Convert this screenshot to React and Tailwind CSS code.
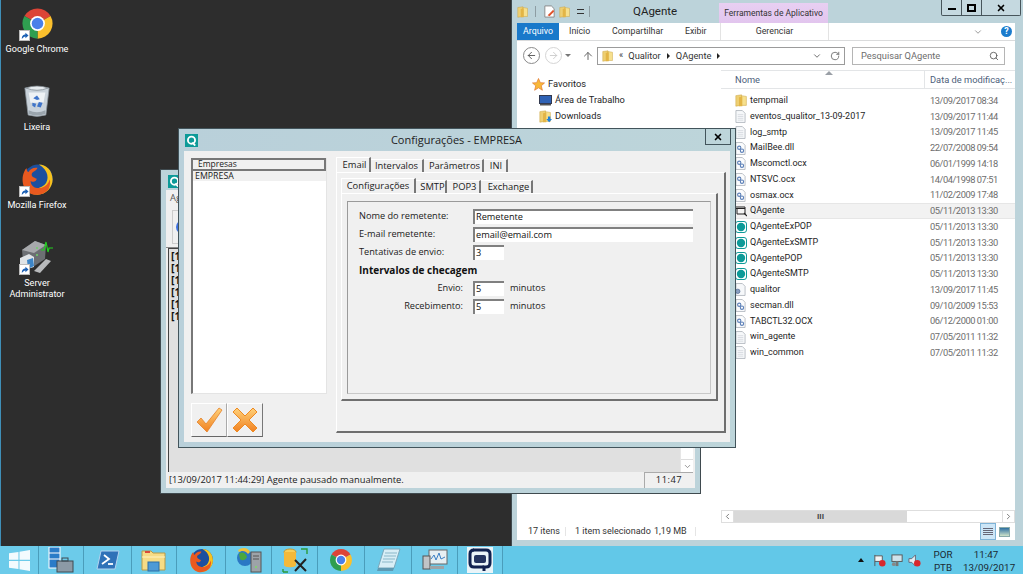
import React from "react";
import { Search, RotateCw, ChevronDown, ArrowUp, ArrowLeft, ArrowRight, X, ChevronLeft, ChevronRight } from "lucide-react";

const Shortcut = () => (
  <span className="absolute left-0 bottom-0 w-[11px] h-[11px] bg-white border border-[#bbb] flex items-center justify-center">
    <svg viewBox="0 0 10 10" className="w-[9px] h-[9px]"><path d="M2 9 C2 5 4 4 6 4 L6 2 L9.5 5 L6 8 L6 6 C4.5 6 3.5 7 2 9Z" fill="#1a5fb4" /></svg>
  </span>
);
const Chrome = ({ s = 33 }) => (
  <svg viewBox="0 0 24 24" width={s} height={s}>
    <path d="M12 12 L2.5 6.5 A11 11 0 0 1 21.5 6.5Z" fill="#dc4437" />
    <path d="M12 12 L21.5 6.5 A11 11 0 0 1 12 23Z" fill="#fbc02d" />
    <path d="M12 12 L12 23 A11 11 0 0 1 2.5 6.5Z" fill="#2f9e50" />
    <circle cx="12" cy="12" r="5.4" fill="#fff" />
    <circle cx="12" cy="12" r="4.2" fill="#4a80ea" />
  </svg>
);
const Firefox = ({ s = 33 }) => (
  <svg viewBox="0 0 24 24" width={s} height={s}>
    <circle cx="12.5" cy="11.5" r="10.5" fill="#1c4f9f" />
    <path d="M13 1 C18 1 23 5 23 12 C23 18 18 23 12 23 C8 23 4 21 2 17 C5 19 12 20 17 16 C21 12 20 5 13 1Z" fill="#f7c21d" />
    <path d="M2.5 6 C0 11 1 18 5 21 C10 25 17 23 20 19 C21 17 21.5 14 21 12 C20 15 18 17 15 18 C11 19 7 17 7 13 C9 14.5 11 13.5 11.5 11.5 C9.5 10.5 7 10 8 7.5 C9 6 11 6 12 3.5 C9 3 6.5 4.5 5.5 6.5 C4.5 6.5 4 5 4.2 3.8 C3.4 4.3 2.8 5.2 2.5 6Z" fill="#e9591f" />
  </svg>
);
const Bin = () => (
  <svg viewBox="0 0 30 36" width="28" height="34">
    <path d="M2 4 L28 4 L24.5 33 Q15 36 5.5 33Z" fill="#c9d2da" stroke="#8a949c" strokeWidth="0.8" />
    <path d="M3 4 Q15 0 27 4 Q15 9 3 4Z" fill="#e6ebef" stroke="#7e878e" strokeWidth="0.8" />
    <path d="M6 9 L24 9 L22 20 L8 20Z" fill="#eef2f5" />
    <path d="M11 15 l4 -3 l3 4 l-3 1z M10 20 l4 1 l-1 4 l-3 -2z M17 19 l4 1 l-2 5 l-4 -1z" fill="#3f74c9" />
    <path d="M6 28 Q15 32 24 28 L24 32 Q15 35 6 32Z" fill="#9ba5ad" />
  </svg>
);
const ServerAdmin = () => (
  <svg viewBox="0 0 36 34" width="36" height="34">
    <path d="M3 10 L16 1 L27 5 L26 19 L14 27 L4 21Z" fill="#6c6f73" />
    <path d="M3 10 L16 1 L27 5 L15 13Z" fill="#a7a9ac" />
    <path d="M1 18 L10 14 L15 17 L15 27 L5 30 L1 26Z" fill="#dfe3e6" />
    <path d="M8 20 L14 18 L15 26 L9 29Z" fill="#3d85c6" />
    <path d="M15 31 L27 19 L32 21 L21 33Z" fill="#b8babc" />
    <path d="M22 10 L25 10 L27 2 L29 12 L30 8 L34 8" fill="none" stroke="#22d01f" strokeWidth="1.2" />
    <circle cx="18" cy="8" r="1" fill="#71d26b" /><circle cx="18" cy="15" r="1" fill="#71d26b" />
  </svg>
);
const Folder = ({ s = 13, arrow }) => (
  <svg viewBox="0 0 16 16" width={s} height={s}>
    <path d="M1 2 L8 1 L8 14 L1 15Z" fill="#eecf72" stroke="#c9a23e" strokeWidth="0.6" />
    <path d="M8 2 L14 3 L14 14 L8 14Z" fill="#f6e08e" stroke="#c9a23e" strokeWidth="0.6" />
    <path d="M5 4 L9 3 L9 15 L5 15Z" fill="#e3b546" />
    {arrow && <path d="M11 8 L14 8 L14 11 L16 11 L12.5 15 L9 11 L11 11Z" fill="#1e80d8" />}
  </svg>
);
const Doc = () => (
  <svg viewBox="0 0 12 14" width="11" height="13">
    <path d="M1 .5 H8 L11 3.5 V13.5 H1Z" fill="#f6f8fa" stroke="#a4acb4" strokeWidth="0.8" />
    <path d="M3 5H9 M3 7H9 M3 9H9 M3 11H9" stroke="#cfd5da" strokeWidth="0.8" />
  </svg>
);
const Dll = () => (
  <svg viewBox="0 0 12 14" width="11" height="13">
    <path d="M1 .5 H8 L11 3.5 V13.5 H1Z" fill="#fbfcfd" stroke="#a4acb4" strokeWidth="0.8" />
    <circle cx="4.6" cy="6.2" r="1.8" fill="none" stroke="#5c80b8" strokeWidth="1.2" />
    <circle cx="7.6" cy="9.4" r="1.8" fill="none" stroke="#5c80b8" strokeWidth="1.2" />
  </svg>
);
const QApp = () => (
  <svg viewBox="0 0 12 12" width="12" height="12">
    <rect x=".5" y=".5" width="11" height="11" rx="2.5" fill="#fff" stroke="#0d9a98" strokeWidth="1" />
    <circle cx="6" cy="6" r="4.2" fill="#0d9a98" />
  </svg>
);
const QWin = () => (
  <svg viewBox="0 0 12 12" width="12" height="12">
    <path d="M1 2 H10 V9 H2 V3" fill="#f5f5f5" stroke="#222" strokeWidth="1" />
    <path d="M9 8 L12 11" stroke="#222" strokeWidth="1.2" />
    <path d="M1 3.5H10" stroke="#222" strokeWidth="1" />
  </svg>
);
const Cog = () => (
  <svg viewBox="0 0 12 14" width="11" height="13">
    <path d="M1 .5 H8 L11 3.5 V13.5 H1Z" fill="#f6f8fa" stroke="#a4acb4" strokeWidth="0.8" />
    <circle cx="3" cy="9" r="2.4" fill="#8aa0c0" stroke="#4e6a94" strokeWidth="0.8" />
  </svg>
);
const QLogo = () => (
  <span className="bg-[#0d9a98] flex items-center justify-center shrink-0 w-[13px] h-[13px]">
    <svg viewBox="0 0 12 12" width="11" height="11">
      <circle cx="6" cy="5.6" r="3.9" fill="none" stroke="#fff" strokeWidth="2" />
      <path d="M7 8 L10 11.5" stroke="#fff" strokeWidth="2" />
    </svg>
  </span>
);

const files = [
  ["tempmail", "13/09/2017 08:34", "folder"],
  ["eventos_qualitor_13-09-2017", "13/09/2017 11:44", "doc"],
  ["log_smtp", "13/09/2017 11:45", "doc"],
  ["MailBee.dll", "22/07/2008 09:54", "dll"],
  ["Mscomctl.ocx", "06/01/1999 14:18", "dll"],
  ["NTSVC.ocx", "14/04/1998 07:51", "dll"],
  ["osmax.ocx", "11/02/2009 17:48", "dll"],
  ["QAgente", "05/11/2013 13:30", "win"],
  ["QAgenteExPOP", "05/11/2013 13:30", "q"],
  ["QAgenteExSMTP", "05/11/2013 13:30", "q"],
  ["QAgentePOP", "05/11/2013 13:30", "q"],
  ["QAgenteSMTP", "05/11/2013 13:30", "q"],
  ["qualitor", "13/09/2017 11:45", "cog"],
  ["secman.dll", "09/10/2009 15:53", "dll"],
  ["TABCTL32.OCX", "06/12/2000 01:00", "dll"],
  ["win_agente", "07/05/2011 11:32", "doc"],
  ["win_common", "07/05/2011 11:32", "doc"],
];
const FileIcon = ({ t }) =>
  t === "folder" ? <Folder s={13} /> : t === "doc" ? <Doc /> : t === "dll" ? <Dll /> : t === "win" ? <QWin /> : t === "q" ? <QApp /> : <Cog />;

const DesktopIcon = ({ label, children }) => (
  <div className="h-[78px] w-[74px] flex flex-col items-center">
    <div className="relative h-[36px] w-[36px] flex items-center justify-center">{children}</div>
    <div className="mt-[3px] text-white text-[9.1px] leading-[11px] text-center whitespace-nowrap">{label}</div>
  </div>
);

const Explorer = () => (
  <div className="absolute left-[511px] top-0 w-[512px] h-[546px] bg-[#bcd3da] border-l border-[#3f4a4f] flex flex-col font-['Roboto',sans-serif]">
    <div className="h-[23px] flex items-center pl-[5px] shrink-0">
      <Folder s={12} />
      <span className="ml-[6px] w-px h-[11px] bg-[#8d9da3]" />
      <svg viewBox="0 0 14 14" width="13" height="13" className="ml-[7px]"><path d="M2 1H9L12 4V13H2Z" fill="#fff" stroke="#888" /><path d="M5 11 L11 5 L12 7 L7 12Z" fill="#e0522c" /></svg>
      <span className="ml-[3px]"><Folder s={12} /></span>
      <span className="ml-[6px] w-[7px] h-[5px] border-t border-b border-[#333]" />
      <span className="ml-[5px] w-px h-[11px] bg-[#8d9da3]" />
      <span className="ml-[43px] w-[86px] text-[11.5px] text-[#222] pt-[1px]">QAgente</span>
      <div className="w-[109px] h-[20px] mt-[3px] self-start bg-gradient-to-b from-[#e8cff2] to-[#e2c5ee] flex items-center justify-center text-[8.5px] text-[#333] whitespace-nowrap">Ferramentas de Aplicativo</div>
      <div className="ml-auto mr-[2px] self-start flex h-[16px] border border-t-0 border-[#47555b] rounded-b-[2px] bg-[#c5d9e0]">
        <span className="w-[20px] flex items-center justify-center border-r border-[#47555b]"><span className="w-[8px] h-[2px] mt-[3px] bg-black" /></span>
        <span className="w-[20px] flex items-center justify-center border-r border-[#47555b]"><span className="w-[9px] h-[8px] border-2 border-black" /></span>
        <span className="w-[38px] flex items-center justify-center"><X size={10} strokeWidth={4} color="#000" /></span>
      </div>
    </div>
    <div className="ml-[5px] mr-[8px] flex-1 bg-white flex flex-col min-h-0">
      <div className="h-[18px] flex items-center border-b border-[#dadbdc] text-[8.8px] text-[#333] shrink-0">
        <span className="w-[42px] h-[17px] bg-[#1979ca] text-white flex items-center justify-center">Arquivo</span>
        <span className="ml-[10px] w-[22px]">Início</span>
        <span className="ml-[21px] w-[52px]">Compartilhar</span>
        <span className="ml-[21px] w-[22px]">Exibir</span>
        <span className="ml-[13px] w-[109px] h-[17px] flex items-center justify-center border-x border-[#e3e3e3]">Gerenciar</span>
        <span className="ml-auto mr-[18px] flex"><ChevronDown size={10} color="#888" /></span>
        <span className="mr-[3px] w-[11px] h-[11px] rounded-full bg-[#1b7ccd] text-white text-[9px] font-bold flex items-center justify-center">?</span>
      </div>
      <div className="h-[29px] flex items-center shrink-0 pl-[6px]">
        <span className="w-[17px] h-[17px] rounded-full border border-[#8b8b8b] flex items-center justify-center"><ArrowLeft size={11} color="#555" /></span>
        <span className="ml-[5px] w-[17px] h-[17px] rounded-full border border-[#d5d5d5] flex items-center justify-center"><ArrowRight size={11} color="#ccc" /></span>
        <span className="ml-[3px] w-0 h-0 border-x-[3px] border-x-transparent border-t-[3px] border-t-[#777]" />
        <span className="ml-[11px] flex"><ArrowUp size={12} color="#666" /></span>
        <div className="ml-[3px] w-[248px] h-[18px] border border-[#9b9b9b] flex items-center pl-[4px] text-[9.3px] text-[#333]">
          <Folder s={12} />
          <span className="ml-[5px] text-[9px]">«</span>
          <span className="ml-[5px]">Qualitor</span>
          <span className="ml-[6px] w-0 h-0 border-y-[3px] border-y-transparent border-l-[3px] border-l-[#222]" />
          <span className="ml-[6px]">QAgente</span>
          <span className="ml-[6px] w-0 h-0 border-y-[3px] border-y-transparent border-l-[3px] border-l-[#222]" />
          <span className="ml-auto flex"><ChevronDown size={10} color="#555" /></span>
          <span className="ml-[8px] mr-[4px] flex"><RotateCw size={10} color="#666" /></span>
        </div>
        <div className="ml-[7px] w-[153px] h-[18px] border border-[#b5b5b5] flex items-center pl-[8px] text-[9.3px] text-[#6d6d6d]">
          Pesquisar QAgente
          <span className="ml-auto mr-[5px] flex"><Search size={10} color="#555" /></span>
        </div>
      </div>
      <div className="flex-1 flex min-h-0">
        <div className="w-[204px] shrink-0 text-[9.3px] text-[#1e1e1e] pl-[15px] pt-[6px]">
          <div className="h-[16px] flex items-center">
            <svg viewBox="0 0 14 14" width="13" height="13"><path d="M7 .5 L9 5 L13.5 5.3 L10 8.4 L11.2 13.2 L7 10.6 L2.8 13.2 L4 8.4 L.5 5.3 L5 5Z" fill="#f8b83a" stroke="#e0722a" strokeWidth="0.7" /></svg>
            <span className="ml-[3px]">Favoritos</span>
          </div>
          <div className="h-[16px] flex items-center pl-[7px]">
            <svg viewBox="0 0 13 11" width="13" height="11"><rect x=".5" y=".5" width="12" height="8" fill="#2f62b5" stroke="#333a4f" /><rect x="1" y="9" width="11" height="1.5" fill="#555" /></svg>
            <span className="ml-[3px]">Área de Trabalho</span>
          </div>
          <div className="h-[16px] flex items-center pl-[7px]">
            <Folder s={13} arrow />
            <span className="ml-[3px]">Downloads</span>
          </div>
        </div>
        <div className="flex-1 flex flex-col min-w-0">
          <div className="h-[19px] border-t border-b border-[#e3e5e7] flex items-center text-[9.3px] text-[#4c607a] shrink-0 relative">
            <span className="absolute left-[104px] top-0 w-0 h-0 border-x-[4px] border-x-transparent border-b-[4px] border-b-[#9a9fa6]" />
            <span className="pl-[14px] w-[204px] shrink-0 border-r border-[#e3e5e7] h-full flex items-center">Nome</span>
            <span className="pl-[5px] whitespace-nowrap">Data de modificaç...</span>
          </div>
          <div className="flex-1 pt-[4px] min-h-0 overflow-hidden">
            {files.map(([n, d, t]) => (
              <div key={n} className={`h-[15.75px] flex items-center ${n === "QAgente" ? "bg-[#f2f2f2] border-y border-[#e6e6e6]" : ""}`}>
                <span className="w-[29px] pl-[14px] flex shrink-0"><FileIcon t={t} /></span>
                <span className="w-[180px] text-[9px] text-[#1e1e1e] whitespace-nowrap">{n}</span>
                <span className="text-[9.3px] text-[#6d6d6d] whitespace-nowrap tracking-[-0.45px]">{d}</span>
              </div>
            ))}
          </div>
          <div className="h-[13px] flex border-y border-[#dedede] shrink-0">
            <span className="w-[13px] flex items-center justify-center border-x border-[#dedede]"><ChevronLeft size={9} color="#555" /></span>
            <span className="w-[173px] bg-[#d9d9d9] flex items-center justify-center text-[8px] text-[#444] font-bold leading-none">III</span>
            <span className="flex-1" />
            <span className="w-[13px] flex items-center justify-center border-x border-[#dedede]"><ChevronRight size={9} color="#555" /></span>
          </div>
        </div>
      </div>
      <div className="h-[17px] flex items-center shrink-0 text-[9px] text-[#333] pl-[11px] whitespace-nowrap">
        <span className="w-[37px]">17 itens</span>
        <span className="w-px h-[9px] bg-[#e5e5e5]" />
        <span className="ml-[9px] w-[79px]">1 item selecionado</span>
        <span>1,19 MB</span>
        <span className="ml-[8px] w-px h-[9px] bg-[#e5e5e5]" />
        <span className="ml-auto w-[16px] h-[17px] bg-[#cde6f7] border border-[#7fb4d8] flex flex-col justify-center gap-[1px] px-[2px]">
          <span className="h-px bg-[#667]" /><span className="h-px bg-[#667]" /><span className="h-px bg-[#667]" /><span className="h-px bg-[#667]" />
        </span>
        <span className="ml-[3px] mr-[5px] w-[11px] h-[10px] border border-[#8aa] bg-gradient-to-b from-[#2b6f9f] to-[#cfe3c8]" />
      </div>
    </div>
    <div className="h-[6px] shrink-0" />
  </div>
);

const BackWindow = () => (
  <div className="absolute left-[160px] top-[169px] w-[541px] h-[325px] bg-[#bcd3da] border border-[#3f4a4f] flex flex-col px-[5px] pb-[5px]">
    <div className="h-[20px] flex items-center pl-[2px] pt-[3px] shrink-0"><QLogo /></div>
    <div className="flex-1 bg-[#f0f0f0] flex flex-col min-h-0 text-[9.4px] text-[#222]">
      <div className="h-[17px] pl-[4px] flex items-center text-[#555] shrink-0">Agente</div>
      <div className="h-[41px] pl-[6px] pt-[3px] shrink-0 border-b border-[#888]">
        <div className="w-[36px] h-[34px] border border-[#ccc] flex items-center pl-[3px]"><span className="w-[14px] h-[14px] rounded-full bg-[#3b6fe0]" /></div>
      </div>
      <div className="flex-1 flex min-h-0 pl-[2px] pr-[2px]">
        <div className="flex-1 bg-[#e0e0e0] border-l border-t border-[#444] pl-[2px] pt-[1px] font-bold text-[10.5px] text-[#111] leading-[12px]">
          <div>[13</div><div>[13</div><div>[13</div><div>[13</div><div>[13</div><div>[13</div>
        </div>
        <div className="w-[13px] bg-white flex flex-col justify-end border-l border-[#e6e6e6]">
          <span className="h-[13px] flex items-center justify-center border-t border-[#ddd]"><ChevronDown size={9} color="#777" /></span>
        </div>
      </div>
      <div className="h-[16px] flex items-center shrink-0 pl-[3px] pr-[2px]">
        <span className="text-[#222]">[13/09/2017 11:44:29] Agente pausado manualmente.</span>
        <span className="ml-auto w-[49px] h-full flex items-center justify-center border-l border-t border-[#aaa] text-[#222] tracking-[0.5px]">11:47</span>
      </div>
    </div>
  </div>
);

const Field = ({ label, w, value, right, suffix }) => (
  <div className="h-[14px] flex items-center">
    <span className={`w-[114px] shrink-0 whitespace-nowrap ${right ? "text-right pr-[10px]" : ""}`}>{label}</span>
    <span className={`h-[15px] bg-white border-l-2 border-t-2 border-[#808080] pl-[1px] leading-[11px] text-[#111] overflow-hidden ${w}`}>{value}</span>
    {suffix && <span className="ml-[6px]">{suffix}</span>}
  </div>
);

const Dialog = () => (
  <div className="absolute left-[178px] top-[128px] w-[558px] h-[320px] bg-gradient-to-r from-[#b9d0da] to-[#bdd5da] border border-[#42545b] flex flex-col px-[5px] pb-[5px]">
    <div className="h-[22px] shrink-0 flex items-center pl-[1px]">
      <QLogo />
      <span className="flex-1 text-center text-[11px] text-[#222] pl-[10px]">Configurações - EMPRESA</span>
      <span className="self-start -mr-px w-[26px] h-[16px] border-x border-b border-[#42545b] flex items-center justify-center"><X size={10} strokeWidth={4} color="#000" /></span>
    </div>
    <div className="flex-1 bg-[#f0f0f0] flex min-h-0 pt-[7px] pl-[7px] pr-[4px] pb-[9px] text-[9.2px] text-[#1a1a1a]">
      <div className="w-[136px] shrink-0 flex flex-col">
        <div className="h-[236px] shrink-0 bg-white border-r border-b border-r-[#e4e4e4] border-b-[#e4e4e4] border-l-2 border-l-[#777] flex flex-col">
          <div className="h-[13px] border-2 border-[#777] border-l-0 bg-[#f0f0f0] pl-[5px] flex items-center text-[8.5px]">Empresas</div>
          <div className="h-[10px] bg-[#f0f0f0] pl-[2px] pt-[1px] flex items-center text-[8.8px]">EMPRESA</div>
        </div>
        <div className="mt-[9px] flex">
          <span className="w-[36px] h-[34px] flex items-center justify-center border border-white border-r-[#aaa] border-b-[#666]">
            <svg viewBox="0 0 30 28" width="30" height="28"><defs><linearGradient id="orange" x1="0" y1="0" x2="0" y2="1"><stop offset="0" stopColor="#ffd27a" /><stop offset="1" stopColor="#f08020" /></linearGradient></defs><path d="M3 16 L7 12 L12 18 L25 2 L28 4 L13 26 Z" fill="url(#orange)" stroke="#e5822a" strokeWidth="0.8" /></svg>
          </span>
          <span className="w-[36px] h-[34px] flex items-center justify-center border border-white border-r-[#777] border-b-[#666]">
            <svg viewBox="0 0 26 26" width="26" height="26"><path d="M5 1 L13 9 L21 1 L25 5 L17 13 L25 21 L21 25 L13 17 L5 25 L1 21 L9 13 L1 5Z" fill="url(#orange)" stroke="#ee8a22" strokeWidth="1" /></svg>
          </span>
        </div>
      </div>
      <div className="ml-[9px] -mt-px flex-1 flex flex-col min-w-0">
        <div className="h-[15px] flex items-end shrink-0 text-[9.4px]">
          <div className="h-[15px] w-[35px] pl-[3px] flex items-center justify-center bg-[#f0f0f0] border-r-2 border-[#777] border-l border-t border-l-white border-t-white">Email</div>
          <div className="h-[13px] w-[53px] flex items-center justify-center border-r-2 border-[#777] border-t border-t-white">Intervalos</div>
          <div className="h-[13px] w-[60px] pl-[3px] flex items-center justify-center border-r-2 border-[#777] border-t border-t-white">Parâmetros</div>
          <div className="h-[13px] w-[24px] pl-[2px] flex items-center justify-center border-r-2 border-[#777] border-t border-t-white">INI</div>
        </div>
        <div className="h-[261px] shrink-0 border-t border-l border-t-white border-l-white border-r-2 border-b-2 border-r-[#6f6f6f] border-b-[#6f6f6f] pl-[4px] pr-[6px] pt-[5px] flex flex-col">
          <div className="h-[15px] flex items-end shrink-0 text-[9.4px]">
            <div className="h-[15px] w-[75px] flex items-center justify-center border-r-2 border-[#777] border-l border-t border-l-white border-t-white">Configurações</div>
            <div className="h-[13px] w-[31px] pl-[4px] flex items-center justify-center border-r-2 border-[#777] border-t border-t-white">SMTP</div>
            <div className="h-[13px] w-[34px] pl-[3px] flex items-center justify-center border-r-2 border-[#777] border-t border-t-white">POP3</div>
            <div className="h-[13px] w-[52px] pl-[5px] flex items-center justify-center border-r-2 border-[#777] border-t border-t-white">Exchange</div>
          </div>
          <div className="h-[208px] shrink-0 border-t border-l border-t-white border-l-white border-r-2 border-b-2 border-r-[#6f6f6f] border-b-[#6f6f6f] pl-[5px] pr-[5px] pt-[7px] pb-[5px] flex">
            <div className="flex-1 border border-t-[#9a9a9a] border-l-[#9a9a9a] border-r-[#c8c8c8] border-b-[#c8c8c8] pl-[11px] pt-[7px] flex flex-col gap-[4px]">
              <Field label="Nome do remetente:" w="w-[220px]" value="Remetente" />
              <Field label="E-mail remetente:" w="w-[220px]" value="email@email.com" />
              <Field label="Tentativas de envio:" w="w-[31px]" value="3" />
              <div className="h-[14px] flex items-center font-bold text-[10px] text-[#111] pt-[1px]">Intervalos de checagem</div>
              <Field label="Envio:" w="w-[31px]" value="5" right suffix="minutos" />
              <Field label="Recebimento:" w="w-[31px]" value="5" right suffix="minutos" />
            </div>
          </div>
        </div>
      </div>
    </div>
  </div>
);

const WinLogo = () => (
  <svg viewBox="0 0 20 20" width="21" height="21"><path d="M0 3 L9 1.8 V9.4 H0Z M10 1.6 L20 0 V9.4 H10Z M0 10.4 H9 V18 L0 16.8Z M10 10.4 H20 V20 L10 18.4Z" fill="#fff" opacity="0.92" /></svg>
);
const TaskIcons = [
  ["w-[39px]", <WinLogo />],
  ["w-[45px]", <svg viewBox="0 0 26 26" width="26" height="26"><rect x="1" y="0" width="11" height="21" fill="#2a7bc8" stroke="#fff" /><path d="M1 6H12 M1 12H12" stroke="#fff" /><rect x="9" y="14" width="16" height="11" fill="#8c9aa6" stroke="#3f4a52" /><rect x="14" y="11" width="6" height="3" fill="none" stroke="#3f4a52" /></svg>],
  ["w-[48px]", <svg viewBox="0 0 24 20" width="24" height="20"><path d="M5 1 H23 L19 19 H1Z" fill="#2f72b8" stroke="#b3d3ef" /><path d="M8 5 L13 9 L6 14" fill="none" stroke="#fff" strokeWidth="1.8" /><path d="M12 14H17" stroke="#fff" strokeWidth="1.8" /></svg>],
  ["w-[45px]", <svg viewBox="0 0 26 24" width="26" height="24"><path d="M1 3 H10 L12 5 H24 V22 H1Z" fill="#f6dc86" stroke="#b89a46" /><path d="M1 9 H24" stroke="#fff3c2" /><rect x="7" y="14" width="11" height="9" fill="#4d9ad6" stroke="#2c6fa6" /><rect x="4" y="3" width="5" height="2" fill="#d84a3a" /></svg>],
  ["w-[49px]", <Firefox s={25} />],
  ["w-[46px]", <svg viewBox="0 0 26 26" width="26" height="26"><circle cx="9" cy="11" r="8" fill="#2b78c4" /><path d="M3 7 C6 4 10 6 11 10 C9 14 6 14 4 12Z" fill="#4aa83e" /><path d="M2 3 C6 0 12 0 14 5 L12 7 C10 4 6 3 3 5Z" fill="#f0c33c" /><rect x="15" y="5" width="10" height="20" fill="#9da3a8" stroke="#555" /><path d="M17 9H23 M17 12H23" stroke="#555" /><circle cx="20" cy="20" r="1" fill="#7ddc64" /></svg>],
  ["w-[46px]", <svg viewBox="0 0 26 26" width="26" height="26"><ellipse cx="8" cy="5" rx="6" ry="3" fill="#f7cf5a" stroke="#c89a2c" /><path d="M2 5 V18 C2 21 14 21 14 18 V5" fill="#f3b93a" /><path d="M19 2H25V7 M1 25V22 M1 25H6" fill="none" stroke="#2a9a3a" strokeWidth="1.4" /><path d="M13 24 L24 12 M13 13 L24 24" stroke="#222" strokeWidth="2" /></svg>],
  ["w-[47px]", <Chrome s={24} />],
  ["w-[47px]", <svg viewBox="0 0 26 24" width="26" height="24"><path d="M9 1 H25 L19 20 H3Z" fill="#d8eef6" stroke="#7ba8bb" /><path d="M10 5H22 M9 8H21 M8 11H20 M7 14H18" stroke="#8ab7c8" /><path d="M3 20 H19 L18 23 H2Z" fill="#5e9ab3" /></svg>],
  ["w-[46px]", <svg viewBox="0 0 26 24" width="26" height="24"><rect x="7" y="2" width="18" height="14" fill="#e6eff3" stroke="#666" /><path d="M9 11 L12 7 L14 12 L17 5 L19 11 L23 9" fill="none" stroke="#3b7fc4" /><rect x="1" y="8" width="7" height="13" fill="#c0c4c7" stroke="#555" /><rect x="8" y="18" width="14" height="3" fill="#9ea3a6" /></svg>],
  ["w-[45px]", <span className="w-[26px] h-[26px] bg-[#eaf4f8] flex items-center justify-center"><svg viewBox="0 0 24 24" width="24" height="24"><path d="M5 2 H18 Q22 2 22 6 V15 Q22 19 18 19 H16 V23" fill="none" stroke="#10214f" strokeWidth="3" /><path d="M16 19 H6 Q2 19 2 15 V6 Q2 2 6 2" fill="none" stroke="#10214f" strokeWidth="3" /><rect x="6" y="7" width="12" height="8" rx="2" fill="#24345f" /></svg></span>],
];

const Taskbar = () => (
  <div className="absolute left-0 right-0 bottom-0 h-[28px] bg-[#62c8e8] flex items-center font-['Roboto',sans-serif]">
    {TaskIcons.map(([w, icon], i) => (
      <div key={i} className={`h-full flex items-center justify-center overflow-hidden border-r border-[#4a9dbb] bg-[#6ccbea] ${w}`}>{icon}</div>
    ))}
    <div className="ml-auto flex items-center text-[9.8px] text-[#1a2a33] h-full">
      <span className="w-0 h-0 border-x-[3px] border-x-transparent border-b-[4px] border-b-[#111]" />
      <svg viewBox="0 0 14 14" width="13" height="13" className="ml-[9px]"><path d="M2 1V13 M2 2H10V8H2" fill="#f4f4f4" stroke="#555" /><circle cx="10" cy="10" r="3.5" fill="#d8282c" /></svg>
      <svg viewBox="0 0 14 14" width="13" height="13" className="ml-[5px]"><rect x="1" y="1" width="11" height="7" fill="#cfe3ec" stroke="#555" /><rect x="5" y="8" width="3" height="5" fill="#777" /><circle cx="3" cy="11" r="2" fill="#888" /></svg>
      <svg viewBox="0 0 14 14" width="13" height="13" className="ml-[4px]"><path d="M1 5H4L8 1V13L4 9H1Z" fill="#e6eef2" stroke="#667" /><circle cx="10" cy="10" r="3.5" fill="#d8282c" /></svg>
      <div className="ml-[11px] w-[22px] text-center leading-[13px] pt-[1px]"><div>POR</div><div>PTB</div></div>
      <div className="ml-[9px] mr-[14px] w-[46px] text-center leading-[13px] pt-[1px] whitespace-nowrap"><div>11:47</div><div>13/09/2017</div></div>
    </div>
  </div>
);

export default function App() {
  return (
    <div className="relative w-[1023px] h-[574px] overflow-hidden bg-[#2d2d2d] font-['Open_Sans',sans-serif]">
      <div className="absolute left-0 top-0 bottom-0 w-px bg-[#3f8fb8]" />
      <div className="pt-[5px] flex flex-col w-[74px] font-['Roboto',sans-serif]">
        <DesktopIcon label="Google Chrome"><Chrome /><Shortcut /></DesktopIcon>
        <DesktopIcon label="Lixeira"><Bin /></DesktopIcon>
        <DesktopIcon label="Mozilla Firefox"><Firefox /><Shortcut /></DesktopIcon>
        <DesktopIcon label={<>Server<br />Administrator</>}><ServerAdmin /><Shortcut /></DesktopIcon>
      </div>
      <Explorer />
      <BackWindow />
      <Dialog />
      <Taskbar />
    </div>
  );
}
